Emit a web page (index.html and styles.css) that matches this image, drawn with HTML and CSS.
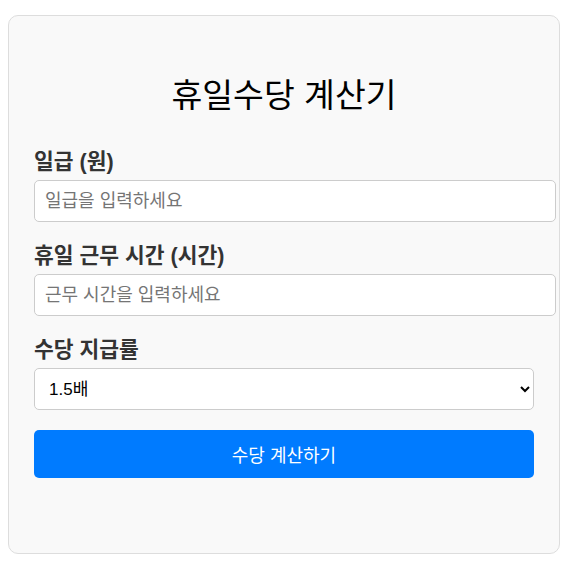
FILE: index.html
```html
<!DOCTYPE html>
<html lang="ko">
<head>
    <meta charset="UTF-8">
    <meta name="viewport" content="width=device-width, initial-scale=1.0">
    <title>휴일수당 계산기</title>
    <link rel="stylesheet" href="styles.css">
</head>
<body>
    <div class="container">
        <h1>휴일수당 계산기</h1>

        <div class="form-group">
            <label for="dailyWage">일급 (원)</label>
            <input type="number" id="dailyWage" placeholder="일급을 입력하세요">
        </div>

        <div class="form-group">
            <label for="workHours">휴일 근무 시간 (시간)</label>
            <input type="number" id="workHours" placeholder="근무 시간을 입력하세요">
        </div>

        <div class="form-group">
            <label for="rate">수당 지급률</label>
            <select id="rate">
                <option value="1.5">1.5배</option>
                <option value="2">2배</option>
            </select>
        </div>

        <button class="calc-btn">수당 계산하기</button>

        <!-- 결과 표시 -->
        <div id="result"></div>
    </div>
</body>
</html>
```

FILE: styles.css
```css
body {
    font-family: 'Liberation Sans', 'Noto Sans CJK KR', sans-serif;
    margin: 8px;
}
.container {
    max-width: 500px;
    margin-top: 7px;
    padding: 25px;
    background-color: #f9f9f9;
    border: 1px solid #ddd;
    border-radius: 10px;
}
h1 {
    text-align: center;
    font-size: 33.5px;
    font-weight: normal;
    line-height: 40px;
    color: #000;
    margin: 35px 0 32px;
}
.form-group {
    margin-bottom: 20px;
}
label {
    display: block;
    font-size: 21.5px;
    font-weight: bold;
    line-height: 24px;
    color: #333;
    padding-top: 2px;
    margin-bottom: 6px;
}
input {
    width: 100%;
    padding: 10px;
    font-family: inherit;
    font-size: 18px;
    line-height: 20px;
    border: 1px solid #ccc;
    border-radius: 5px;
    background: #fff;
}
input::placeholder {
    color: #757575;
}
select {
    width: 100%;
    height: 42px;
    padding: 0 10px;
    font-family: inherit;
    font-size: 17px;
    color: #000;
    border: 1px solid #ccc;
    border-radius: 5px;
    background-color: #fff;
}
.calc-btn {
    display: block;
    width: 100%;
    height: 48px;
    font-family: inherit;
    font-size: 18px;
    color: #fff;
    background-color: #007bff;
    border: none;
    border-radius: 5px;
    cursor: pointer;
}
.calc-btn:hover {
    background-color: #0056b3;
}
#result {
    margin-top: 20px;
    min-height: 30px;
}
```
